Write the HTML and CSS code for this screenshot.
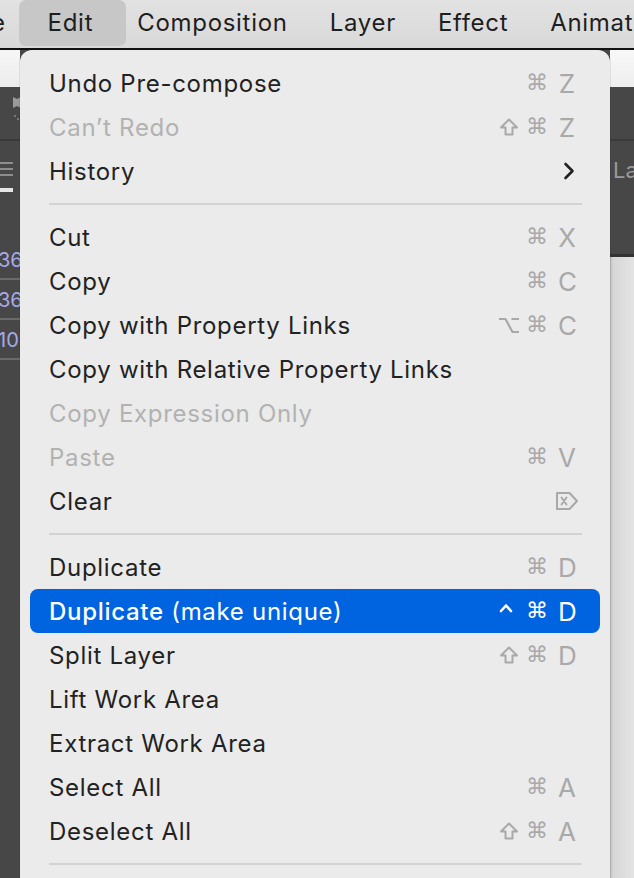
FILE: index.html
```html
<!DOCTYPE html>
<html>
<head>
<meta charset="utf-8">
<link rel="stylesheet" href="styles.css">
</head>
<body>
<div class="screen">
  <header class="menubar">
    <span class="mb-item mb-first">File</span>
    <span class="mb-item mb-active">Edit</span>
    <span class="mb-item">Composition</span>
    <span class="mb-item">Layer</span>
    <span class="mb-item">Effect</span>
    <span class="mb-item">Animation</span>
  </header>
  <div class="stage">
    <aside class="side-left">
      <div class="sl-top"></div>
      <div class="sl-tools">
        <svg class="flag" width="10" height="26" viewBox="0 0 10 26"><path d="M1 0 L5 2 L9 0 L9 11 L5 9 L1 11 Z" fill="#9a9a9a"/><circle cx="3" cy="19" r="1" fill="#8a8a8a"/><circle cx="6" cy="22" r="1" fill="#8a8a8a"/></svg>
      </div>
      <div class="sl-rule"></div>
      <div class="sl-panel">
        <div class="hamburger"><i></i><i></i><i></i></div>
        <div class="white-bar"></div>
        <div class="num-list">
          <div class="num">36</div>
          <div class="num">36</div>
          <div class="num">10</div>
        </div>
      </div>
    </aside>

    <nav class="menu">
      <div class="row"><span class="label">Undo Pre-compose</span><span class="keys"><span class="cmd">⌘</span><span class="key">Z</span></span></div>
      <div class="row disabled"><span class="label">Can’t Redo</span><span class="keys"><svg class="shift" width="20" height="20" viewBox="0 0 20 20"><path d="M10 2.5 L18 10.5 H13.5 V17.5 H6.5 V10.5 H2 Z" fill="none" stroke="currentColor" stroke-width="2" stroke-linejoin="round"/></svg><span class="cmd">⌘</span><span class="key">Z</span></span></div>
      <div class="row"><span class="label">History</span><svg class="chev" width="12" height="18" viewBox="0 0 12 18"><path d="M2.5 2 L9.5 9 L2.5 16" fill="none" stroke="#222" stroke-width="2.6" stroke-linecap="round" stroke-linejoin="round"/></svg></div>
      <div class="sep"></div>
      <div class="row"><span class="label">Cut</span><span class="keys"><span class="cmd">⌘</span><span class="key">X</span></span></div>
      <div class="row"><span class="label">Copy</span><span class="keys"><span class="cmd">⌘</span><span class="key">C</span></span></div>
      <div class="row"><span class="label">Copy with Property Links</span><span class="keys"><svg class="opt" width="22" height="20" viewBox="0 0 22 20"><path d="M1 4 H7.5 L14.5 17 H21 M13.5 4 H21" fill="none" stroke="currentColor" stroke-width="2.2" stroke-linejoin="round"/></svg><span class="cmd">⌘</span><span class="key">C</span></span></div>
      <div class="row"><span class="label">Copy with Relative Property Links</span></div>
      <div class="row disabled"><span class="label">Copy Expression Only</span></div>
      <div class="row disabled"><span class="label">Paste</span><span class="keys"><span class="cmd">⌘</span><span class="key">V</span></span></div>
      <div class="row"><span class="label">Clear</span><svg class="del" width="24" height="20" viewBox="0 0 24 20"><path d="M2 2 H14.5 L22 10 L14.5 18 H2 Z" fill="none" stroke="#a8a8a8" stroke-width="2" stroke-linejoin="round"/><path d="M6.5 6.5 L11.5 13.5 M11.5 6.5 L6.5 13.5" stroke="#a8a8a8" stroke-width="1.9" stroke-linecap="round"/></svg></div>
      <div class="sep"></div>
      <div class="row"><span class="label">Duplicate</span><span class="keys"><span class="cmd">⌘</span><span class="key">D</span></span></div>
      <div class="row selected"><span class="label"><span class="strong">Duplicate</span> (make unique)</span><span class="keys"><svg class="ctrl" width="14" height="20" viewBox="0 0 14 20"><path d="M2 10 L7 4.5 L12 10" fill="none" stroke="currentColor" stroke-width="2.6" stroke-linecap="round" stroke-linejoin="round"/></svg><span class="cmd">⌘</span><span class="key">D</span></span></div>
      <div class="row"><span class="label">Split Layer</span><span class="keys"><svg class="shift" width="20" height="20" viewBox="0 0 20 20"><path d="M10 2.5 L18 10.5 H13.5 V17.5 H6.5 V10.5 H2 Z" fill="none" stroke="currentColor" stroke-width="2" stroke-linejoin="round"/></svg><span class="cmd">⌘</span><span class="key">D</span></span></div>
      <div class="row"><span class="label">Lift Work Area</span></div>
      <div class="row"><span class="label">Extract Work Area</span></div>
      <div class="row"><span class="label">Select All</span><span class="keys"><span class="cmd">⌘</span><span class="key">A</span></span></div>
      <div class="row"><span class="label">Deselect All</span><span class="keys"><svg class="shift" width="20" height="20" viewBox="0 0 20 20"><path d="M10 2.5 L18 10.5 H13.5 V17.5 H6.5 V10.5 H2 Z" fill="none" stroke="currentColor" stroke-width="2" stroke-linejoin="round"/></svg><span class="cmd">⌘</span><span class="key">A</span></span></div>
      <div class="sep"></div>
    </nav>

    <aside class="side-right">
      <div class="sr-top"></div>
      <div class="sr-dark">
        <div class="sr-rule"></div>
        <div class="sr-tab">Layer</div>
      </div>
      <div class="sr-rule2"></div>
      <div class="sr-light"></div>
    </aside>
  </div>
</div>
</body>
</html>
```

FILE: styles.css
```css
* { box-sizing: border-box; }
html, body { margin: 0; padding: 0; }
body {
  width: 634px;
  height: 878px;
  overflow: hidden;
  background: #474747;
  font-family: Inter, "Noto Sans", "Liberation Sans", sans-serif;
}
.screen {
  width: 634px;
  height: 878px;
  display: flex;
  flex-direction: column;
  overflow: hidden;
}

/* Menu bar */
.menubar {
  height: 50px;
  flex: none;
  display: flex;
  align-items: flex-start;
  background: linear-gradient(#e2e2e2, #d9d9d9);
  border-bottom: 2px solid #121212;
  white-space: nowrap;
  font-size: 24px;
  letter-spacing: 0.7px;
  color: #1e1e1e;
}
.mb-item {
  height: 46px;
  line-height: 46px;
  padding: 0 21px;
  flex: none;
}
.mb-first { margin-left: -58px; }
.mb-active {
  background: #c7c7c7;
  border-radius: 7px;
  padding: 0 33px 0 29px;
  margin-left: -8px;
  margin-right: -10px;
}

/* Stage below */
.stage {
  flex: 1;
  display: flex;
  min-height: 0;
}

.side-left {
  width: 20px;
  flex: none;
  display: flex;
  flex-direction: column;
  overflow: hidden;
  background: #474747;
}
.sl-top { height: 37px; background: linear-gradient(#f6f6f6, #ececec); flex: none; }
.sl-tools { height: 52px; flex: none; padding: 10px 0 0 12px; }
.flag { display: block; }
.sl-rule { height: 2px; background: #393939; flex: none; }
.sl-panel { flex: 1; padding-top: 21px; }
.hamburger { display: flex; flex-direction: column; gap: 4px; width: 13px; }
.hamburger i { display: block; height: 2px; background: #8d8d8d; }
.white-bar { width: 13px; height: 4px; background: #e6e6e6; margin-top: 12px; }
.num-list { margin-top: 50px; }
.num {
  height: 40px;
  line-height: 40px;
  font-size: 20px;
  color: #a7a9e8;
  border-bottom: 2px solid #6a6a6a;
  margin-left: -2px;
  margin-top: -2px;
}
.num + .num { margin-top: 0; }

/* Menu */
.menu {
  width: 590px;
  flex: none;
  background: #ebebeb;
  border-radius: 12px 12px 0 0;
  box-shadow: 0 0 0 1px rgba(0,0,0,0.08);
  padding-top: 11px;
  position: relative;
  z-index: 1;
}
.row {
  height: 44px;
  margin: 0 10px;
  padding: 0 24px 0 19px;
  display: flex;
  align-items: center;
  justify-content: space-between;
  border-radius: 8px;
  font-size: 24px;
  letter-spacing: 0.7px;
  color: #222222;
  white-space: nowrap;
}
.row.disabled .label { color: #b2b2b2; }
.row.selected { background: #0064e1; color: #ffffff; }
.row.selected .keys { color: #ffffff; }
.strong { font-weight: 500; }
.keys {
  display: flex;
  align-items: center;
  color: #a9a9a9;
  font-size: 26px;
  letter-spacing: 0;
}
.shift, .opt, .ctrl { display: block; margin-right: 7px; }
.opt { margin-right: 6px; }
.ctrl { margin-right: 13px; }
.cmd { font-family: "DejaVu Sans", sans-serif; font-size: 22px; line-height: 1; }
.key { width: 18px; margin-left: 10px; text-align: center; }
.chev { display: block; margin-right: 1px; }
.del { display: block; margin-right: -3px; }
.sep {
  height: 22px;
  display: flex;
  align-items: center;
  margin: 0 28px 0 29px;
}
.sep::before {
  content: "";
  display: block;
  width: 100%;
  height: 2px;
  background: #d3d3d3;
}

/* Right side */
.side-right {
  flex: 1;
  display: flex;
  flex-direction: column;
  overflow: hidden;
}
.sr-top { height: 37px; flex: none; background: linear-gradient(#f8f8f8, #eeeeee); }
.sr-dark { height: 167px; flex: none; background: #474747; }
.sr-rule { height: 2px; background: #3a3a3a; margin-top: 52px; }
.sr-tab { font-size: 22px; color: #9a9a9a; padding: 16px 0 0 3px; white-space: nowrap; }
.sr-rule2 { height: 3px; flex: none; background: #333333; }
.sr-light {
  flex: 1;
  background: linear-gradient(90deg, #b9b9b9 0, #d6d6d6 3px, #dedede 14px, #e3e3e3 100%);
}
```
